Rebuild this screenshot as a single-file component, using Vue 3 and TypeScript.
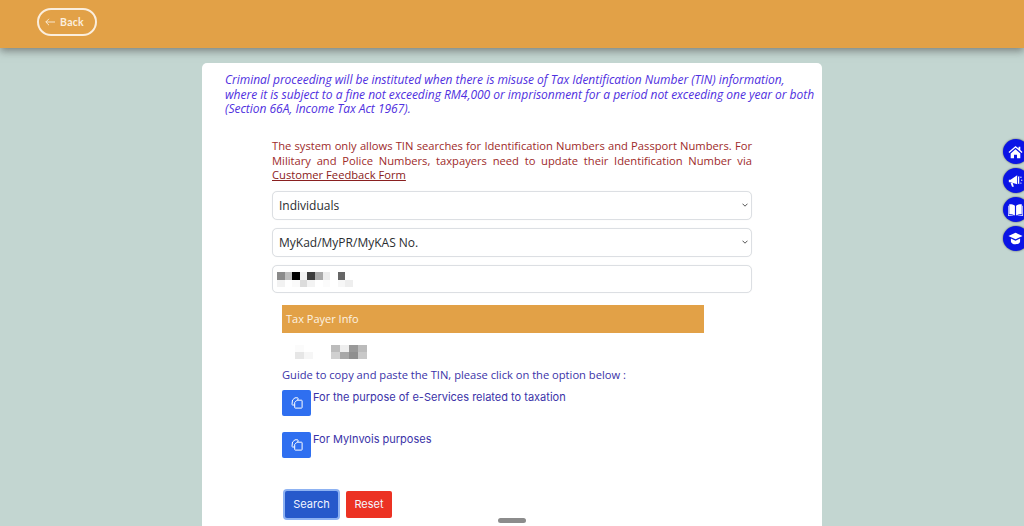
<script setup lang="ts">
import { ref } from 'vue';

const category = ref('Individuals');
const idType = ref('MyKad/MyPR/MyKAS No.');

// censored value, drawn as blocks of grey: [column, row, grey]
const inputBlur: [number, number, string][] = [
  [0, 0, '#8a8a8a'], [1, 0, '#bdbdbd'], [2, 0, '#000'], [3, 0, '#f2f2f2'], [4, 0, '#3c3c3c'], [5, 0, '#a9a9a9'], [6, 0, '#ececec'], [8, 0, '#666'],
  [0, 1, '#f2f2f2'], [2, 1, '#fafafa'], [3, 1, '#dcdcdc'], [4, 1, '#f3f3f3'], [6, 1, '#fbfbfb'], [8, 1, '#f7f7f7'], [9, 1, '#eee'],
];
const infoBlur: [number, number, string][] = [
  [0, 0, '#fbfbfb'], [4, 0, '#bcbcbc'], [5, 0, '#eee'], [6, 0, '#999'], [7, 0, '#bbb'],
  [0, 1, '#e6e6e6'], [1, 1, '#f6f6f6'], [4, 1, '#d0d0d0'], [5, 1, '#a8a8a8'], [6, 1, '#8f8f8f'], [7, 1, '#c8c8c8'],
];

function cellStyle(cell: [number, number, string]) {
  return { gridColumn: cell[0] + 1, gridRow: cell[1] + 1, background: cell[2] };
}

const guides = ['For the purpose of e-Services related to taxation', 'For MyInvois purposes'];
</script>

<template>
  <div class="page">
    <header class="topbar">
      <button type="button" class="back-btn">
        <svg width="10" height="8" viewBox="0 0 10 8" fill="none" stroke="currentColor" stroke-width="0.9">
          <path d="M10 4H.8M4 .8.8 4 4 7.200" />
        </svg>
        Back
      </button>
    </header>

    <main class="content">
      <section class="card">
        <p class="warning">
          Criminal proceeding will be instituted when there is misuse of Tax Identification Number (TIN) information,
          where it is subject to a fine not exceeding RM4,000 or imprisonment for a period not exceeding one year or both
          (Section 66A, Income Tax Act 1967).
        </p>

        <form class="form" @submit.prevent>
          <p class="notice">
            The system only allows TIN searches for Identification Numbers and Passport Numbers. For Military and Police
            Numbers, taxpayers need to update their Identification Number via
            <a href="#" class="notice-link">Customer Feedback Form</a>
          </p>

          <div class="select-wrap">
            <select v-model="category" class="field">
              <option>Individuals</option>
            </select>
            <svg class="chevron" width="6" height="4" viewBox="0 0 6 4" fill="none" stroke="#555" stroke-width="1">
              <path d="M.5.7 3 3.200 5.500.7" />
            </svg>
          </div>

          <div class="select-wrap">
            <select v-model="idType" class="field">
              <option>MyKad/MyPR/MyKAS No.</option>
            </select>
            <svg class="chevron" width="6" height="4" viewBox="0 0 6 4" fill="none" stroke="#555" stroke-width="1">
              <path d="M.5.7 3 3.200 5.500.7" />
            </svg>
          </div>

          <div class="field input-box">
            <div class="blur blur-input">
              <i v-for="(c, i) in inputBlur" :key="i" :style="cellStyle(c)"></i>
            </div>
          </div>

          <div class="result">
            <div class="result-head">Tax Payer Info</div>
            <div class="blur blur-info">
              <i v-for="(c, i) in infoBlur" :key="i" :style="cellStyle(c)"></i>
            </div>
            <p class="guide-title">Guide to copy and paste the TIN, please click on the option below :</p>
            <div v-for="g in guides" :key="g" class="guide-row">
              <button type="button" class="copy-btn" :aria-label="g">
                <svg width="12" height="12" viewBox="0 0 12 12" fill="none" stroke="#fff" stroke-width="1" stroke-linejoin="round">
                  <path d="M3.500 8H1.500a.6.6 0 0 1-.5-.7L1.500 3 4 .8h2.600a.6.6 0 0 1 .5.7L6.800 3" />
                  <path d="M6 3.200h4.500a.6.6 0 0 1 .6.6v6.700a.6.6 0 0 1-.6.6H4.300a.6.6 0 0 1-.6-.6V5.500z" />
                </svg>
              </button>
              <span class="guide-text">{{ g }}</span>
            </div>
          </div>

          <div class="actions">
            <button type="submit" class="btn btn-search">Search</button>
            <button type="reset" class="btn btn-reset">Reset</button>
          </div>
        </form>
      </section>
    </main>

    <nav class="side-rail">
      <a class="rail-item" href="#" aria-label="Home">
        <svg width="15" height="14" viewBox="0 0 17 16" fill="#fff">
          <path d="M8.500 1 .5 8l1 1.100L8.500 3l7 6.100 1-1.100-2.500-2.200V2h-2v2z" />
          <path d="M3 9.600 8.500 4.800 14 9.600V15h-3.800v-4H6.800v4H3z" />
        </svg>
      </a>
      <a class="rail-item" href="#" aria-label="Announcements">
        <svg width="15" height="14" viewBox="0 0 18 16" fill="#fff">
          <path d="M1 6.500h2l8-5.500v11L3 9.500H1z" />
          <path d="M3 10h2.500L7 15H4.800z" />
          <path d="M12 3l1.500-1V12L12 11z" />
          <circle cx="15.500" cy="3.500" r=".8" /><circle cx="16.500" cy="7" r=".8" /><circle cx="15.500" cy="10.500" r=".8" />
        </svg>
      </a>
      <a class="rail-item" href="#" aria-label="Guides">
        <svg width="15" height="14" viewBox="0 0 18 16" fill="#fff">
          <path d="M8.300 3C6.500 1.600 4 1.100 1.500 1.200V13c2.500-.1 5 .3 6.800 1.600z" />
          <path d="M9.700 3c1.800-1.400 4.300-1.900 6.800-1.800V13c-2.500-.1-5 .3-6.800 1.600z" />
          <path d="M0 3h.8v11.200c2.500-.1 5 .2 7 1H1a1 1 0 0 1-1-1zM18 3h-.8v11.200c-2.500-.1-5 .2-7 1H17a1 1 0 0 0 1-1z" />
        </svg>
      </a>
      <a class="rail-item" href="#" aria-label="Learning">
        <svg width="15" height="13" viewBox="0 0 18 15" fill="#fff">
          <path d="M9 .5.5 4.500 9 8.500l8.500-4z" />
          <path d="M3.500 7.500V11c0 1.800 2.500 3.500 5.500 3.500s5.500-1.700 5.500-3.500V7.500L9 10.200z" />
        </svg>
      </a>
    </nav>

    <div class="scroll-handle"></div>
  </div>
</template>

<style scoped>
.page {
  position: relative;
  height: 526px;
  overflow: hidden;
  background: #c3d6d1;
  font-family: 'Open Sans', 'Liberation Sans', sans-serif;
}

.topbar {
  height: 48px;
  box-sizing: border-box;
  padding: 8px 0 0 37px;
  background: #e2a147;
  box-shadow: 0 3px 8px rgba(60, 60, 60, 0.55);
}

.back-btn {
  display: flex;
  align-items: center;
  gap: 5px;
  width: 60px;
  height: 28px;
  box-sizing: border-box;
  padding: 0 0 0 6px;
  border: 2px solid #fbeedd;
  border-radius: 14px;
  background: transparent;
  color: #fbeedd;
  font: 700 10.500px 'Lato', sans-serif;
  letter-spacing: 0.3px;
}

.content {
  display: flex;
  justify-content: center;
  padding-top: 15px;
}

.card {
  width: 620px;
  height: 480px;
  box-sizing: border-box;
  padding: 10px 4px 0 23px;
  border-radius: 5px;
  background: #fff;
}

.warning {
  margin: 0;
  font-size: 12px;
  font-style: italic;
  line-height: 14.700px;
  letter-spacing: -0.02px;
  color: #4f2fe0;
}

.form {
  display: flex;
  flex-direction: column;
  width: 480px;
  margin: 22px 0 0 47px;
}

.notice {
  margin: 0 0 8px;
  font-size: 11.200px;
  line-height: 14.500px;
  text-align: justify;
  color: #9e2a2a;
}

.notice-link {
  color: #8a2020;
}

.select-wrap {
  position: relative;
  margin-bottom: 8px;
}

.field {
  display: block;
  width: 100%;
  height: 29px;
  box-sizing: border-box;
  padding: 0 6px;
  border: 1px solid #dcdfe3;
  border-radius: 5px;
  background: #fff;
  appearance: none;
  font: 12px 'Open Sans', sans-serif;
  color: #2a2d30;
  box-shadow: 0 0 1px rgba(0, 0, 0, 0.08);
}

.chevron {
  position: absolute;
  right: 4px;
  top: 12px;
}

.input-box {
  display: flex;
  align-items: center;
  height: 28px;
  padding: 0 4px;
}

.blur {
  display: grid;
}

.blur i {
  display: block;
}

.blur-input {
  grid-auto-rows: 7.500px;
  grid-auto-columns: 7.600px;
  margin-top: 2px;
}

.result {
  margin: 12px 0 0 10px;
  width: 422px;
}

.result-head {
  height: 28px;
  padding-left: 4px;
  background: #e2a147;
  font-size: 11px;
  line-height: 28px;
  color: #fdf3e3;
}

.blur-info {
  margin: 12px 0 0 13px;
  grid-auto-rows: 7px;
  grid-auto-columns: 9px;
}

.guide-title {
  margin: 9px 0 8px;
  font-size: 11.150px;
  line-height: 14px;
  color: #3a32a8;
}

.guide-row {
  display: flex;
  align-items: flex-start;
  gap: 2px;
  height: 42px;
}

.copy-btn {
  display: flex;
  align-items: center;
  justify-content: center;
  width: 29px;
  height: 26px;
  padding: 0;
  border: none;
  border-radius: 2px;
  background: #2f6ff0;
}

.guide-text {
  font: 11px/14px 'Inter', sans-serif;
  color: #3a32a8;
}

.actions {
  display: flex;
  gap: 8px;
  margin: 17px 0 0 13px;
}

.btn {
  height: 27px;
  padding: 0;
  border: none;
  border-radius: 2px;
  font: 11px 'Inter', sans-serif;
  color: #f3f5ff;
}

.btn-search {
  width: 53px;
  background: #2659cb;
  box-shadow: 0 0 0 2px #8db2f2;
}

.btn-reset {
  width: 46px;
  background: #ec3223;
}

.side-rail {
  position: absolute;
  top: 139px;
  left: 1003px;
  display: flex;
  flex-direction: column;
  gap: 4px;
}

.rail-item {
  display: flex;
  align-items: center;
  justify-content: center;
  width: 26px;
  height: 25px;
  box-sizing: border-box;
  padding-right: 2px;
  border-radius: 50%;
  background: #0a14e6;
  box-shadow: 0 0 2px rgba(0, 0, 0, 0.6);
}

.scroll-handle {
  position: absolute;
  left: 498px;
  top: 518px;
  width: 28px;
  height: 5px;
  border-radius: 3px;
  background: #8c8c8c;
}
</style>
